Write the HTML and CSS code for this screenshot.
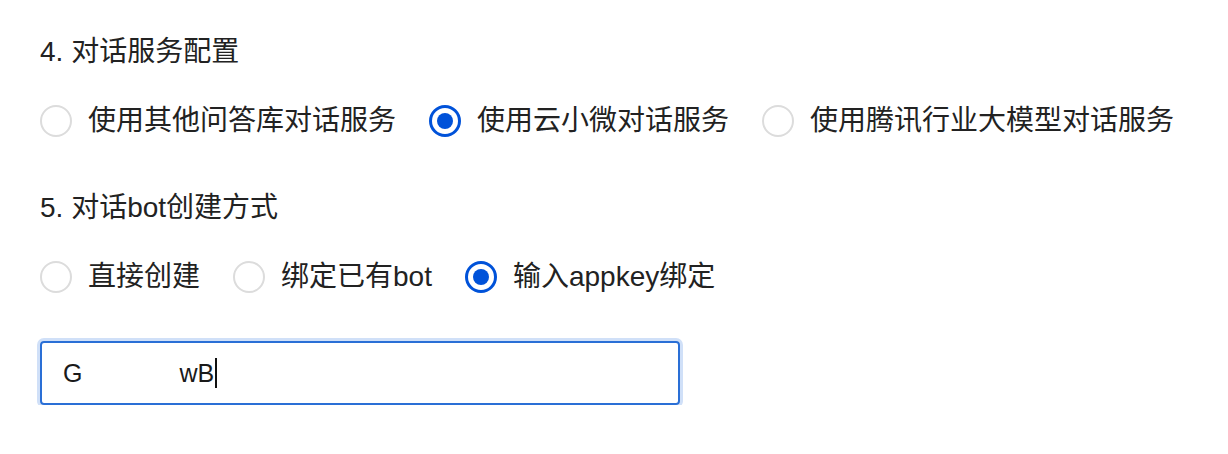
FILE: index.html
```html
<!DOCTYPE html>
<html lang="zh-CN">
<head>
  <meta charset="UTF-8">
  <title>对话配置</title>
  <link rel="stylesheet" href="styles.css">
</head>
<body>
  <div class="form">
    <div class="section">
      <div class="title">4. 对话服务配置</div>
      <div class="radio-group">
        <label class="radio"><span class="dot"></span>使用其他问答库对话服务</label>
        <label class="radio checked"><span class="dot"></span>使用云小微对话服务</label>
        <label class="radio"><span class="dot"></span>使用腾讯行业大模型对话服务</label>
      </div>
    </div>

    <div class="section">
      <div class="title">5. 对话bot创建方式</div>
      <div class="radio-group">
        <label class="radio"><span class="dot"></span>直接创建</label>
        <label class="radio"><span class="dot"></span>绑定已有bot</label>
        <label class="radio checked"><span class="dot"></span>输入appkey绑定</label>
      </div>
    </div>

    <div class="input focused">
      <span>G</span><span class="masked"></span><span>wB</span><span class="caret"></span>
    </div>
  </div>
</body>
</html>
```

FILE: styles.css
```css
body {
  margin: 0;
  background: #fff;
  color: #222;
  font-family: "Liberation Sans", "Noto Sans CJK SC", sans-serif;
}
.form {
  padding: 32px 40px 0;
}
.section {
  margin-bottom: 47px;
}
.title {
  font-size: 28px;
  line-height: 40px;
  margin-bottom: 29px;
}
.radio-group {
  display: flex;
  gap: 33px;
}
.radio {
  display: flex;
  align-items: center;
  gap: 16px;
  font-size: 28px;
  line-height: 40px;
}
.dot {
  width: 32px;
  height: 32px;
  box-sizing: border-box;
  border: 2px solid #dcdcdc;
  border-radius: 50%;
  display: flex;
  align-items: center;
  justify-content: center;
}
.radio.checked .dot {
  border: 3px solid #0052d9;
}
.radio.checked .dot::after {
  content: "";
  width: 16px;
  height: 16px;
  border-radius: 50%;
  background: #0052d9;
}
.input {
  margin-top: -3px;
  width: 640px;
  height: 64px;
  box-sizing: border-box;
  border: 2px solid #2a6fd6;
  border-radius: 4px;
  padding-left: 21px;
  display: flex;
  align-items: center;
  font-size: 25px;
  color: #1a1a1a;
}
.input.focused {
  box-shadow: 0 0 0 3px #d0e0f8;
}
.masked {
  display: inline-block;
  width: 97px;
}
.caret {
  display: inline-block;
  width: 2px;
  height: 30px;
  margin-left: 1px;
  background: #111;
}
```
